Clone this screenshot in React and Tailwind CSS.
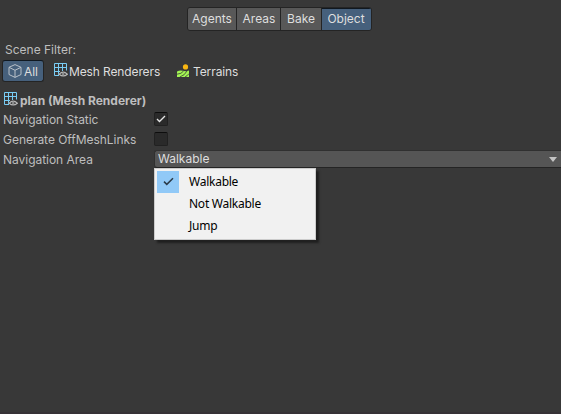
import React from "react";

function MeshIcon() {
  return (
    <svg width="14" height="14" viewBox="0 0 14 14" fill="none" className="shrink-0 -translate-y-px">
      <path d="M.5 12.5V.5h12v7M4.5.5v12M8.5.5V8M.5 4.5h12M.5 8.5H6M.5 12.5H5" stroke="#79cdf5" />
      <path d="M4.4 11Q9.2 5.8 14 11Q9.2 15.4 4.4 11Z" fill="#383838" />
      <path d="M5.2 11.2Q9.2 7.2 13.3 11.2Q9.2 14.6 5.2 11.2Z" stroke="#b8b8b8" strokeWidth="1.2" />
      <circle cx="9.2" cy="10.9" r="1.3" fill="#8c8c8c" />
    </svg>
  );
}

function CubeIcon() {
  return (
    <svg width="14" height="14" viewBox="0 0 14 14" fill="none" stroke="#b9c1c9" strokeLinejoin="round" className="shrink-0">
      <path d="M7 .6l6 2.7v7.2L7 13.4l-6-2.9V3.3zM1 3.3l6 3 6-3M7 6.3v7.1" />
    </svg>
  );
}

function TerrainIcon() {
  return (
    <svg width="13" height="13" viewBox="0 0 13 13" fill="none" className="shrink-0 -translate-y-px">
      <circle cx="8.5" cy="2.9" r="2.6" fill="#f9b612" />
      <path d="M0 7.4Q3 5.8 6 6.8T12 6.4V13H0Z" fill="#a3f553" />
      <path d="M0 10.2Q4.5 10 6.6 7M2.8 13Q7.8 11.4 10 7M8 13Q10.4 11.8 12 9.6" stroke="#383838" strokeWidth=".8" />
    </svg>
  );
}

function Check({ className }) {
  return (
    <svg width="11" height="9" viewBox="0 0 11 9" fill="none" stroke="currentColor" className={className}>
      <path d="M1 4.6l2.8 2.8L10 1.2" strokeWidth="1.5" />
    </svg>
  );
}

const tabs = [
  { name: "Agents", style: "w-[49px] bg-[#585858] border-r border-[#242424]" },
  { name: "Areas", style: "w-[44px] bg-[#585858] border-r border-[#242424] pl-px" },
  { name: "Bake", style: "w-[41px] bg-[#585858] border-r border-[#242424]" },
  { name: "Object", style: "w-[49px] bg-[#46607c] shadow-[inset_0_1px_0_#101820] pr-px" },
];

function Checkbox({ checked }) {
  return (
    <span className="mb-[2px] flex h-[14px] w-[14px] items-center justify-center rounded-[2px] border border-[#212121] border-t-[#0d0d0d] bg-[#2a2a2a] text-[#e4e4e4]">
      {checked && <Check className="h-[8px] w-[10px]" />}
    </span>
  );
}

function Row({ label, children }) {
  return (
    <div className="flex h-5 items-center">
      <span className="w-[154px] shrink-0 pl-[3px] tracking-[-0.03px]">{label}</span>
      {children}
    </div>
  );
}

export default function App() {
  return (
    <div className="flex h-[414px] w-[561px] flex-col overflow-hidden border-b-2 border-[#363236] bg-[#383838] font-['Inter',sans-serif] text-[12px] leading-4 whitespace-nowrap text-[#bebebe]">
      <div className="mt-[7px] ml-[187px] flex h-6 w-[185px] overflow-hidden rounded-[3px] border border-[#242424]">
        {tabs.map((tab) => (
          <div key={tab.name} className={"flex shrink-0 items-center justify-center text-[#dedede] " + tab.style}>
            {tab.name}
          </div>
        ))}
      </div>
      <div className="mt-[11px] pl-[5px]">Scene Filter:</div>
      <div className="mt-[2px] flex h-[22px] items-center text-[#dedede]">
        <div className="ml-[2px] flex h-[22px] w-[42px] items-center gap-[2px] rounded-[3px] border border-[#242424] border-t-[#101820] bg-[#46607c] pl-[5px]">
          <CubeIcon /><span className="pt-[2px] tracking-[-0.1px]">All</span>
        </div>
        <div className="ml-[10px] flex w-[122px] items-center gap-px"><MeshIcon /><span className="pt-[2px] tracking-[-0.12px]">Mesh Renderers</span></div>
        <div className="ml-px flex items-center gap-[3px]"><TerrainIcon /><span className="pt-[2px] tracking-[-0.1px]">Terrains</span></div>
      </div>
      <div className="mt-[10px] flex h-4 items-center gap-[2px] pl-[4px] font-bold"><MeshIcon /><span className="pt-px">plan (Mesh Renderer)</span></div>
      <div className="mt-[2px]">
        <Row label="Navigation Static"><Checkbox checked /></Row>
        <Row label="Generate OffMeshLinks"><Checkbox /></Row>
        <Row label="Navigation Area">
          <div className="relative mb-[2px] h-[18px] w-[407px] shrink-0">
            <div className="flex h-[18px] items-center rounded-l-[3px] border border-r-0 border-[#303030] border-b-[#242424] bg-[#555555] pl-[3px] text-[#dedede]">
              Walkable
              <svg width="8" height="5" viewBox="0 0 8 5" className="absolute top-[7px] left-[395px]"><path d="M0 0h8L4 5z" fill="#c4c4c4" /></svg>
            </div>
            <div className="absolute top-[18px] left-0 h-[72px] w-[162px] border border-[#cccccc] bg-[#f1f1f1] p-[2px] font-['Noto_Sans',sans-serif] text-black shadow-[3px_3px_2px_#202020]">
              {["Walkable", "Not Walkable", "Jump"].map((name, i) => (
                <div key={name} className="flex h-[22px] items-center">
                  <span className={"flex h-[22px] w-[22px] items-center justify-center text-[#2b3a48] " + (i === 0 ? "bg-[#91c9f7]" : "")}>
                    {i === 0 && <Check className="-translate-y-px" />}
                  </span>
                  <span className="ml-[10px] tracking-[-0.25px]">{name}</span>
                </div>
              ))}
            </div>
          </div>
        </Row>
      </div>
    </div>
  );
}
